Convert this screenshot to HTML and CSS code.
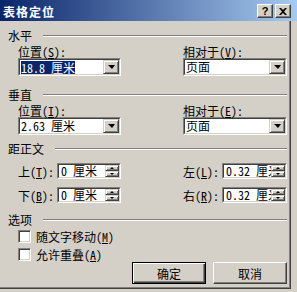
FILE: index.html
```html
<!DOCTYPE html>
<html lang="zh-CN">
<head>
<meta charset="utf-8">
<title>表格定位</title>
<link rel="stylesheet" href="styles.css">
</head>
<body>
<div class="window">
  <div class="titlebar">
    <span class="title">表格定位</span>
    <div class="tb-buttons">
      <span class="tb-btn help">?</span>
      <span class="tb-btn close"><svg width="8" height="7" viewBox="0 0 8 7"><path d="M0 0h2l2 2 2-2h2L5 3.5 8 7H6L4 5 2 7H0l3-3.5z" fill="#000"/></svg></span>
    </div>
  </div>
  <div class="content">
    <div class="group-head first"><span>水平</span><i class="rule"></i></div>
    <div class="pair">
      <div class="field">
        <div class="lbl">位置(<u>S</u>):</div>
        <div class="combo"><div class="inner"><span class="val"><span class="hl">18.8 厘米</span></span><span class="drop"><i class="arrow"></i></span></div></div>
      </div>
      <div class="field">
        <div class="lbl">相对于(<u>V</u>):</div>
        <div class="combo"><div class="inner"><span class="val">页面</span><span class="drop"><i class="arrow"></i></span></div></div>
      </div>
    </div>

    <div class="group-head"><span>垂直</span><i class="rule"></i></div>
    <div class="pair">
      <div class="field">
        <div class="lbl">位置(<u>I</u>):</div>
        <div class="combo"><div class="inner"><span class="val">2.63 厘米</span><span class="drop"><i class="arrow"></i></span></div></div>
      </div>
      <div class="field">
        <div class="lbl">相对于(<u>E</u>):</div>
        <div class="combo"><div class="inner"><span class="val">页面</span><span class="drop"><i class="arrow"></i></span></div></div>
      </div>
    </div>

    <div class="group-head tight"><span>距正文</span><i class="rule"></i></div>
    <div class="pair spins">
      <div class="spin-row">
        <span class="slbl">上(<u>T</u>):</span>
        <div class="spin"><div class="inner"><span class="val">0 厘米</span><span class="ud"><i><b class="tri-up"></b></i><i><b class="tri-dn"></b></i></span></div></div>
      </div>
      <div class="spin-row">
        <span class="slbl">左(<u>L</u>):</span>
        <div class="spin"><div class="inner"><span class="val">0.32 厘米</span><span class="ud"><i><b class="tri-up"></b></i><i><b class="tri-dn"></b></i></span></div></div>
      </div>
      <div class="spin-row">
        <span class="slbl">下(<u>B</u>):</span>
        <div class="spin"><div class="inner"><span class="val">0 厘米</span><span class="ud"><i><b class="tri-up"></b></i><i><b class="tri-dn"></b></i></span></div></div>
      </div>
      <div class="spin-row">
        <span class="slbl">右(<u>R</u>):</span>
        <div class="spin"><div class="inner"><span class="val">0.32 厘米</span><span class="ud"><i><b class="tri-up"></b></i><i><b class="tri-dn"></b></i></span></div></div>
      </div>
    </div>

    <div class="group-head opt"><span>选项</span><i class="rule"></i></div>
    <div class="options">
      <label class="check"><span class="box"></span><span>随文字移动(<u>M</u>)</span></label>
      <label class="check"><span class="box"></span><span>允许重叠(<u>A</u>)</span></label>
    </div>
    <div class="buttons">
      <button class="btn default">确定</button>
      <button class="btn">取消</button>
    </div>
  </div>
</div>
</body>
</html>
```
FILE: styles.css
```css
* { box-sizing: border-box; }
html, body { margin: 0; padding: 0; }
body {
  background: #d4d0c8;
  font-family: "Noto Sans Mono CJK SC", "Noto Sans CJK SC", sans-serif;
  font-size: 12px;
  color: #000;
}
u { text-decoration: underline; text-underline-offset: 1px; }
.window {
  width: 297px;
  height: 292px;
  background: #d4d0c8;
  display: flex;
  flex-direction: column;
}
.titlebar {
  height: 21px;
  flex: none;
  background: linear-gradient(to right, #0a246a, #a6caf0);
  display: flex;
  align-items: center;
  justify-content: space-between;
  padding: 1px 6px 0 3px;
}
.title {
  color: #fff;
  font-weight: bold;
  font-size: 12px;
  letter-spacing: 1px;
  line-height: 13px;
}
.tb-buttons { display: flex; gap: 2px; }
.tb-btn {
  width: 16px;
  height: 14px;
  background: #d4d0c8;
  border: 1px solid;
  border-color: #fff #404040 #404040 #fff;
  box-shadow: inset -1px -1px #808080;
  display: flex;
  align-items: center;
  justify-content: center;
  font-family: "Liberation Sans", sans-serif;
  font-weight: bold;
  font-size: 11px;
  line-height: 12px;
}
.content {
  width: 291px;
  height: 268px;
  flex: none;
  padding: 0 3px 0 8px;
  display: flex;
  flex-direction: column;
  border-right: 1px solid #404040;
  border-bottom: 1px solid #404040;
  box-shadow: inset -1px -1px #808080;
}
.group-head {
  display: flex;
  align-items: center;
  height: 13px;
  line-height: 13px;
  margin-top: 12px;
}
.group-head.first { margin-top: 8px; }
.group-head.tight { margin-top: 7px; }
.group-head.opt { margin-top: 10px; }
.rule {
  flex: 1;
  height: 2px;
  margin-left: 11px;
  border-top: 1px solid #808080;
  border-bottom: 1px solid #fff;
}
.pair {
  display: grid;
  grid-template-columns: 103px 104px;
  column-gap: 62px;
  padding-left: 10px;
  margin-top: 3px;
}
.lbl { line-height: 13px; height: 13px; }
.combo, .spin {
  border: 1px solid;
  border-color: #808080 #fff #fff #808080;
  min-width: 0;
}
.inner {
  height: 100%;
  display: flex;
  background: #fff;
  border: 1px solid;
  border-color: #404040 #d4d0c8 #d4d0c8 #404040;
}
.combo { height: 18px; }
.val {
  flex: 1;
  min-width: 0;
  line-height: 14px;
  padding-left: 1px;
  white-space: nowrap;
}
.hl { background: #0a246a; color: #fff; display: inline-block; line-height: 13px; margin-top: 1px; }
.drop {
  width: 16px;
  flex: none;
  background: #d4d0c8;
  border: 1px solid;
  border-color: #d4d0c8 #404040 #404040 #d4d0c8;
  box-shadow: inset 1px 1px #fff, inset -1px -1px #808080;
  display: flex;
  align-items: center;
  justify-content: center;
}
.arrow {
  width: 0; height: 0;
  border-left: 4px solid transparent;
  border-right: 3px solid transparent;
  border-top: 4px solid #000;
}
.spins {
  row-gap: 8px;
  margin-top: 8px;
}
.spin-row { display: flex; align-items: center; min-width: 0; }
.slbl { width: 39px; flex: none; line-height: 13px; }
.spin { flex: 1; height: 16px; }
.spin .val { line-height: 12px; padding-left: 2px; overflow-x: clip; overflow-y: visible; }
.ud { width: 14px; flex: none; display: flex; flex-direction: column; }
.ud i {
  flex: 1;
  background: #d4d0c8;
  border: 1px solid;
  border-color: #d4d0c8 #404040 #404040 #d4d0c8;
  box-shadow: inset 1px 1px #fff, inset -1px -1px #808080;
  display: flex; align-items: center; justify-content: center;
}
.tri-up { width: 0; height: 0; border-left: 2px solid transparent; border-right: 2px solid transparent; border-bottom: 2px solid #000; }
.tri-dn { width: 0; height: 0; border-left: 2px solid transparent; border-right: 2px solid transparent; border-top: 2px solid #000; }
.options {
  display: flex;
  flex-direction: column;
  gap: 5px;
  padding-left: 10px;
  margin-top: 4px;
}
.check { display: flex; align-items: center; gap: 5px; line-height: 13px; height: 13px; }
.box {
  width: 13px; height: 13px;
  background: #fff;
  border: 1px solid;
  border-color: #808080 #fff #fff #808080;
  box-shadow: inset 1px 1px #404040, inset -1px -1px #d4d0c8;
}
.buttons {
  display: flex;
  justify-content: flex-end;
  gap: 7px;
  margin-top: 1px;
}
.btn {
  width: 74px;
  height: 22px;
  padding: 0;
  font: inherit;
  background: #d4d0c8;
  border: 1px solid;
  border-color: #fff #404040 #404040 #fff;
  box-shadow: inset -1px -1px #808080;
}
.btn.default {
  border: 1px solid #000;
  box-shadow: inset 1px 1px #fff, inset -1px -1px #404040, inset -2px -2px #808080;
}
```
